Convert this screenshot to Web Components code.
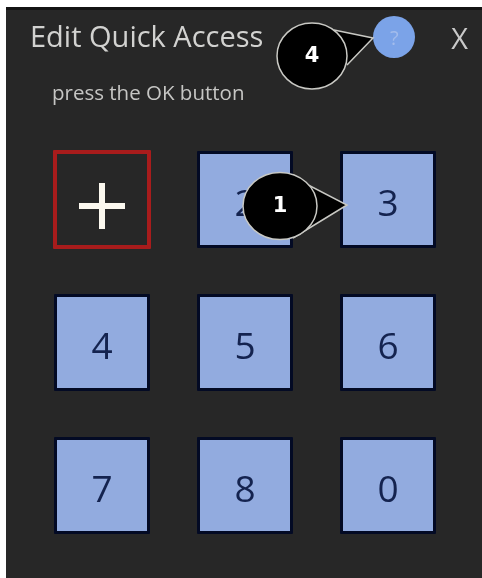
<!DOCTYPE html>
<html>
<head>
<meta charset="utf-8">
<title>Edit Quick Access</title>
<style>
  html, body { margin: 0; background: #fff; }
  body { padding: 7px 0 0 6px; height: 578px; box-sizing: border-box; overflow: hidden; font-family: "Open Sans", "Liberation Sans", sans-serif; }
</style>
</head>
<body>
<quick-panel>
  <span slot="title">Edit Quick Access</span>
  <span slot="hint">press the OK button</span>
  <key-tile variant="add"></key-tile>
  <key-tile>2</key-tile>
  <key-tile>3</key-tile>
  <key-tile>4</key-tile>
  <key-tile>5</key-tile>
  <key-tile>6</key-tile>
  <key-tile>7</key-tile>
  <key-tile>8</key-tile>
  <key-tile>0</key-tile>
  <call-out slot="overlay" label="4" style="--x:270px;--y:11px"></call-out>
  <call-out slot="overlay" label="1" style="--x:235px;--y:161px"></call-out>
</quick-panel>

<script>
// circle + tail for each numbered callout, in the callout's own box
const CALLOUTS = {
  4: { cx: 36, cy: 35, rx: 35, ry: 33, tail: "M58 9 L97 17 L71 44" },
  1: { cx: 39, cy: 35, rx: 37, ry: 33.5, tail: "M46 3 L106 34 L52 67" },
};

class KeyTile extends HTMLElement {
  constructor() {
    super();
    this._shadowRoot = this.attachShadow({ mode: "open" });
  }
  connectedCallback() {
    const add = this.getAttribute("variant") === "add";
    this._shadowRoot.innerHTML = `
      <style>
        :host {
          display: flex;
          align-items: center;
          justify-content: center;
          width: 96px;
          height: 97px;
          box-sizing: border-box;
          padding-top: 4px;
          background: #92abdf;
          border: 3px solid #030a24;
          border-radius: 1px;
          color: #14234f;
          font-size: 37px;
        }
        :host([variant="add"]) {
          width: 98px;
          height: 99px;
          margin: -1px;
          padding-top: 12px;
          background: transparent;
          border: 4px solid #a81c1c;
        }
        svg { display: block; }
      </style>
      ${add ? `<svg width="48" height="48" viewBox="0 0 48 48"><path d="M24 1v46M1 24h46" stroke="#fbf8ef" stroke-width="6"/></svg>` : `<slot></slot>`}
    `;
  }
}

class CallOut extends HTMLElement {
  constructor() {
    super();
    this._shadowRoot = this.attachShadow({ mode: "open" });
  }
  connectedCallback() {
    const label = this.getAttribute("label");
    const c = CALLOUTS[label];
    this._shadowRoot.innerHTML = `
      <style>
        :host {
          position: absolute;
          left: var(--x);
          top: var(--y);
          width: 112px;
          height: 72px;
        }
        svg { position: absolute; inset: 0; }
        span {
          position: absolute;
          left: ${c.cx - 36}px;
          top: ${c.cy - 37}px;
          width: 72px;
          text-align: center;
          color: #fff;
          font: bold 21px/72px "DejaVu Sans", sans-serif;
        }
      </style>
      <svg width="112" height="72" viewBox="0 0 112 72" fill="#000" stroke="#c9c9c4" stroke-width="1.5">
        <path d="${c.tail}"/>
        <ellipse cx="${c.cx}" cy="${c.cy}" rx="${c.rx}" ry="${c.ry}"/>
      </svg>
      <span>${label}</span>
    `;
  }
}

class QuickPanel extends HTMLElement {
  constructor() {
    super();
    this._shadowRoot = this.attachShadow({ mode: "open" });
  }
  connectedCallback() {
    this._shadowRoot.innerHTML = `
      <style>
        :host {
          display: block;
          position: relative;
          width: 476px;
          height: 571px;
          box-sizing: border-box;
          padding: 6px 0 0 24px;
          background: #272727;
          border-top: 3px solid #141414;
          color: #d2d2d0;
          filter: blur(0.6px);
        }
        header {
          display: flex;
          align-items: center;
          height: 42px;
        }
        .title { font-size: 29px; flex: 1; position: relative; top: -2px; }
        .help {
          display: flex;
          align-items: center;
          justify-content: center;
          width: 42px;
          height: 42px;
          margin-right: 36px;
          border-radius: 50%;
          background: #7ba3e8;
          color: #a3bcec;
          font-size: 20px;
        }
        .close { font-size: 29px; margin-right: 14px; color: #c9c9c9; }
        .hint { font-size: 20.5px; line-height: 28px; margin: 20px 0 0 22px; color: #c6c6c4; }
        .grid {
          display: grid;
          grid-template-columns: repeat(3, 96px);
          gap: 46px 47px;
          margin: 45px 0 0 24px;
        }
      </style>
      <header>
        <div class="title"><slot name="title"></slot></div>
        <div class="help">?</div>
        <div class="close">X</div>
      </header>
      <div class="hint"><slot name="hint"></slot></div>
      <div class="grid"><slot></slot></div>
      <slot name="overlay"></slot>
    `;
  }
}

customElements.define("key-tile", KeyTile);
customElements.define("call-out", CallOut);
customElements.define("quick-panel", QuickPanel);
</script>
</body>
</html>
